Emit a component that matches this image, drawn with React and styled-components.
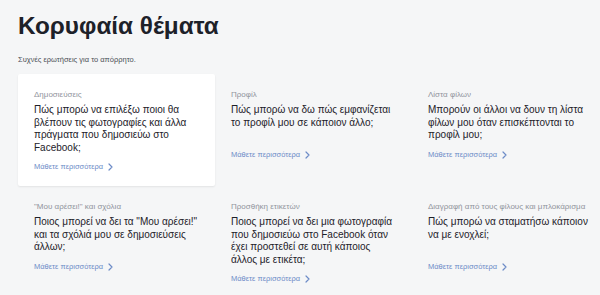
import React from 'react';
import styled, { createGlobalStyle } from 'styled-components';

const GlobalStyle = createGlobalStyle`
  html, body {
    margin: 0;
    padding: 0;
    background: #f5f6f7;
    overflow: hidden;
  }
  body {
    font-family: "Liberation Sans", Arial, sans-serif;
    color: #1d2129;
  }
`;

const Page = styled.div`
  padding: 11px 18px 0;
`;

const Title = styled.h1`
  margin: 0;
  font-size: 24.3px;
  line-height: 30px;
  font-weight: 700;
  color: #1d2129;
`;

const Subtitle = styled.p`
  margin: 14px 0 0;
  font-size: 7.5px;
  line-height: 10px;
  color: #4b4f56;
`;

const Grid = styled.div`
  display: grid;
  grid-template-columns: repeat(3, 197px);
  margin-top: 9px;
`;

const Card = styled.div`
  display: flex;
  flex-direction: column;
  padding: 16px 15px 14px 16px;
  background: ${(p) => (p.active ? '#ffffff' : 'transparent')};
  box-shadow: ${(p) => (p.active ? '0 1px 2px rgba(0, 0, 0, 0.08)' : 'none')};
  border-radius: 2px;
`;

const Label = styled.div`
  font-size: 8px;
  line-height: 10px;
  color: #90949c;
  margin-bottom: 4px;
  white-space: nowrap;
`;

const Question = styled.div`
  font-size: 10px;
  line-height: 12.5px;
  min-height: 37.5px;
  color: #1d2129;
`;

const More = styled.a`
  display: flex;
  align-items: center;
  gap: 5px;
  margin-top: 8px;
  font-size: 7.5px;
  line-height: 10px;
  color: #6d8cc7;
  text-decoration: none;
  cursor: pointer;
`;

const Chevron = () => (
  <svg width="5" height="8" viewBox="0 0 5 8">
    <path d="M1 1 L4 4 L1 7" fill="none" stroke="#6d8cc7" strokeWidth="1.2" strokeLinecap="round" strokeLinejoin="round" />
  </svg>
);

const topics = [
  {
    label: 'Δημοσιεύσεις',
    question: 'Πώς μπορώ να επιλέξω ποιοι θα βλέπουν τις φωτογραφίες και άλλα πράγματα που δημοσιεύω στο Facebook;',
    active: true,
  },
  {
    label: 'Προφίλ',
    question: 'Πώς μπορώ να δω πώς εμφανίζεται το προφίλ μου σε κάποιον άλλο;',
  },
  {
    label: 'Λίστα φίλων',
    question: 'Μπορούν οι άλλοι να δουν τη λίστα φίλων μου όταν επισκέπτονται το προφίλ μου;',
  },
  {
    label: '"Μου αρέσει!" και σχόλια',
    question: 'Ποιος μπορεί να δει τα "Μου αρέσει!" και τα σχόλιά μου σε δημοσιεύσεις άλλων;',
  },
  {
    label: 'Προσθήκη ετικετών',
    question: 'Ποιος μπορεί να δει μια φωτογραφία που δημοσιεύω στο Facebook όταν έχει προστεθεί σε αυτή κάποιος άλλος με ετικέτα;',
  },
  {
    label: 'Διαγραφή από τους φίλους και μπλοκάρισμα',
    question: 'Πώς μπορώ να σταματήσω κάποιον να με ενοχλεί;',
  },
];

const App = () => (
  <>
    <GlobalStyle />
    <Page>
      <Title>Κορυφαία θέματα</Title>
      <Subtitle>Συχνές ερωτήσεις για το απόρρητο.</Subtitle>
      <Grid>
        {topics.map((t) => (
          <Card key={t.label} active={t.active}>
            <Label>{t.label}</Label>
            <Question>{t.question}</Question>
            <More>
              Μάθετε περισσότερα
              <Chevron />
            </More>
          </Card>
        ))}
      </Grid>
    </Page>
  </>
);

export default App;
